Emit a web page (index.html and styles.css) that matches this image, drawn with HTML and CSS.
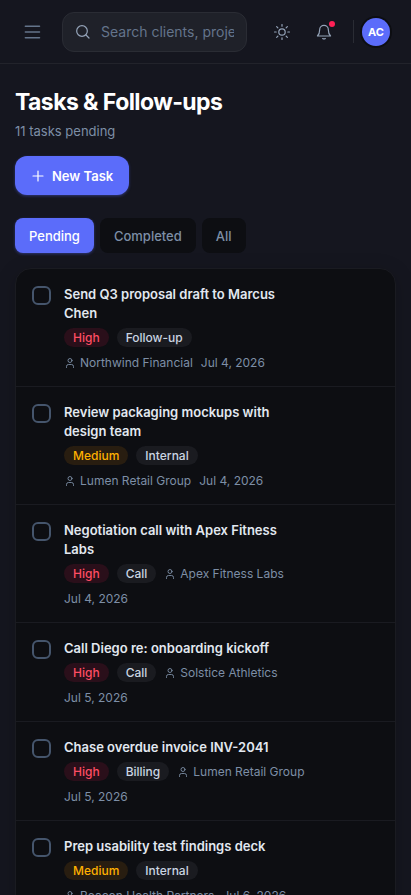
FILE: index.html
```html
<!DOCTYPE html>
<html lang="en">
<head>
<meta charset="utf-8">
<meta name="viewport" content="width=device-width, initial-scale=1">
<title>Tasks &amp; Follow-ups</title>
<link rel="stylesheet" href="styles.css">
</head>
<body>
<svg class="sprite" aria-hidden="true">
  <symbol id="user" viewBox="0 0 24 24"><circle cx="12" cy="7" r="4"/><path d="M5 21v-2a4 4 0 0 1 4-4h6a4 4 0 0 1 4 4v2"/></symbol>
</svg>
<header class="topbar">
  <button class="icon-btn menu" aria-label="Open menu">
    <svg class="icon-lg" viewBox="0 0 24 24"><path d="M4 5h17M4 12h17M4 19h17"/></svg>
  </button>
  <label class="search">
    <svg class="icon-md" viewBox="0 0 24 24"><circle cx="10.500" cy="10.500" r="8"/><path d="m16.500 16.500 4.500 4.500"/></svg>
    <input type="text" aria-label="Search" placeholder="Search clients, projects, tasks">
  </label>
  <div class="actions">
    <button class="icon-btn" aria-label="Switch theme">
      <svg class="icon-md" viewBox="0 0 24 24"><circle cx="12" cy="12" r="4.800"/><path d="M12 .8v2.500M12 20.700v2.500M.8 12h2.500M20.700 12h2.500M4 4l1.800 1.800M18.200 18.200 20 20M4 20l1.800-1.800M18.200 5.800 20 4"/></svg>
    </button>
    <button class="icon-btn" aria-label="Notifications">
      <svg class="icon-md" viewBox="0 0 24 24"><path d="M5.500 8.500a6.500 6.500 0 0 1 13 0c0 4.500 1 7 3.300 9.500H2.200c2.300-2.500 3.300-5 3.300-9.500ZM10 21.800c1.200.8 2.800.8 4 0"/></svg>
      <span class="dot"></span>
    </button>
    <span class="divider"></span>
    <button class="avatar" aria-label="Account">AC</button>
  </div>
</header>
<main class="content">
  <h1>Tasks &amp; Follow-ups</h1>
  <p class="subtitle">11 tasks pending</p>
  <button class="primary"><svg class="icon-md" viewBox="0 0 24 24"><path d="M12 4.500v15M4.500 12h15"/></svg>New Task</button>
  <div class="tabs">
    <button class="tab active">Pending</button>
    <button class="tab">Completed</button>
    <button class="tab">All</button>
  </div>
  <ul class="card">
    <li class="task">
      <input type="checkbox" id="t1">
      <div class="body">
        <label class="title" for="t1">Send Q3 proposal draft to Marcus Chen</label>
        <div class="meta"><span class="badge high">High</span><span class="badge">Follow-up</span><span class="client"><svg class="icon-sm"><use href="#user"/></svg>Northwind Financial</span><span>Jul 4, 2026</span></div>
      </div>
    </li>
    <li class="task">
      <input type="checkbox" id="t2">
      <div class="body">
        <label class="title" for="t2">Review packaging mockups with design team</label>
        <div class="meta"><span class="badge medium">Medium</span><span class="badge">Internal</span><span class="client"><svg class="icon-sm"><use href="#user"/></svg>Lumen Retail Group</span><span>Jul 4, 2026</span></div>
      </div>
    </li>
    <li class="task">
      <input type="checkbox" id="t3">
      <div class="body">
        <label class="title" for="t3">Negotiation call with Apex Fitness Labs</label>
        <div class="meta"><span class="badge high">High</span><span class="badge">Call</span><span class="client"><svg class="icon-sm"><use href="#user"/></svg>Apex Fitness Labs</span><span>Jul 4, 2026</span></div>
      </div>
    </li>
    <li class="task">
      <input type="checkbox" id="t4">
      <div class="body">
        <label class="title" for="t4">Call Diego re: onboarding kickoff</label>
        <div class="meta"><span class="badge high">High</span><span class="badge">Call</span><span class="client"><svg class="icon-sm"><use href="#user"/></svg>Solstice Athletics</span><span>Jul 5, 2026</span></div>
      </div>
    </li>
    <li class="task">
      <input type="checkbox" id="t5">
      <div class="body">
        <label class="title" for="t5">Chase overdue invoice INV-2041</label>
        <div class="meta"><span class="badge high">High</span><span class="badge">Billing</span><span class="client"><svg class="icon-sm"><use href="#user"/></svg>Lumen Retail Group</span><span>Jul 5, 2026</span></div>
      </div>
    </li>
    <li class="task">
      <input type="checkbox" id="t6">
      <div class="body">
        <label class="title" for="t6">Prep usability test findings deck</label>
        <div class="meta"><span class="badge medium">Medium</span><span class="badge">Internal</span><span class="client"><svg class="icon-sm"><use href="#user"/></svg>Beacon Health Partners</span><span>Jul 6, 2026</span></div>
      </div>
    </li>
  </ul>
</main>
</body>
</html>
```
FILE: styles.css
```css
* { box-sizing: border-box; }

body {
  margin: 0;
  height: 100vh;
  display: flex;
  flex-direction: column;
  background: #15161f;
  color: #e2e8f0;
  font-family: Inter, sans-serif;
  font-size: 13px;
}

button, input { font: inherit; color: inherit; }
button { border: 0; padding: 0; background: none; cursor: pointer; }

svg { fill: none; stroke: currentColor; stroke-width: 1.8; stroke-linecap: round; stroke-linejoin: round; flex: none; }
.sprite { position: absolute; width: 0; height: 0; }
.icon-lg { width: 20px; height: 20px; }
.icon-md { width: 16px; height: 16px; }
.icon-sm { width: 12px; height: 12px; }

.topbar {
  flex: none;
  display: flex;
  align-items: center;
  height: 64px;
  padding: 0 21px 0 15px;
  border-bottom: 1px solid #22232b;
}
.icon-btn { position: relative; display: grid; place-items: center; width: 34px; height: 34px; color: #94a3b8; }
.menu { color: #64748b; }
.search {
  flex: 1;
  min-width: 0;
  display: flex;
  align-items: center;
  gap: 10px;
  height: 40px;
  margin-left: 13px;
  padding: 0 12px;
  border: 1px solid #2a2c34;
  border-radius: 12px;
  background: #1f2129;
  color: #94a3b8;
}
.search input { flex: 1; min-width: 0; padding: 0; border: 0; outline: 0; background: none; font-size: 14px; }
.search input::placeholder { color: #64748b; opacity: 1; }
.actions { display: flex; align-items: center; gap: 8px; margin-left: 18px; }
.dot { position: absolute; top: 6px; right: 6px; width: 6px; height: 6px; border-radius: 50%; background: #ff2056; }
.divider { width: 1px; height: 23px; margin-left: 4px; background: #2a2c34; }
.avatar {
  width: 28px;
  height: 28px;
  border-radius: 50%;
  background: #5b6cfa;
  box-shadow: 0 0 0 2px #0d0e12;
  color: #fff;
  font-size: 11px;
  font-weight: 700;
}

.content { flex: 1; min-height: 0; overflow-y: auto; scrollbar-width: none; padding: 23px 15px; }
h1 { margin: 0; color: #fff; font-size: 23px; line-height: 30px; font-weight: 700; letter-spacing: -0.025em; }
.subtitle { margin: 4px 0 15px; color: #7d8ea6; font-size: 13px; line-height: 20px; }
.primary {
  display: flex;
  align-items: center;
  gap: 6px;
  height: 39px;
  padding: 0 16px 0 15px;
  border-radius: 12px;
  background: #5b6cfa;
  box-shadow: 0 1px 3px #5b6cfa66;
  color: #fff;
  font-weight: 600;
}
.tabs { display: flex; gap: 6px; margin: 23px 0 15px; }
.tab { height: 35px; padding: 0 14px; border-radius: 8px; background: #0d0e12; color: #7d8ea6; font-weight: 500; }
.tab.active { background: #5b6cfa; box-shadow: 0 1px 3px #5b6cfa66; color: #fff; }

.card {
  margin: 0;
  padding: 0;
  list-style: none;
  border: 1px solid #1a1b21;
  border-radius: 16px;
  background: #0d0e12;
  box-shadow: 0 4px 20px #0000002e;
}
.task { display: flex; align-items: flex-start; gap: 13px; padding: 16px 89px 15px 16px; border-bottom: 1px solid #1a1b21; }
.task:last-child { border-bottom: 0; }
.task input {
  flex: none;
  appearance: none;
  width: 19px;
  height: 19px;
  margin: 1px 0 0;
  border: 2px solid #45556c;
  border-radius: 6px;
}
.task input:checked { border-color: #5b6cfa; background: #5b6cfa; }
.title { display: block; font-weight: 600; line-height: 19px; }
.meta { display: flex; flex-wrap: wrap; align-items: center; gap: 8px; margin-top: 5px; color: #7d8ea6; font-size: 12px; line-height: 16px; }
.badge { padding: 2px 9px 1px; border-radius: 10px; background: #1a1b20; color: #cad5e2; font-weight: 500; }
.high { background: #2a0f1a; color: #ff4d63; }
.medium { background: #281d10; color: #ffb000; }
.client { display: flex; align-items: center; gap: 4px; }
```
